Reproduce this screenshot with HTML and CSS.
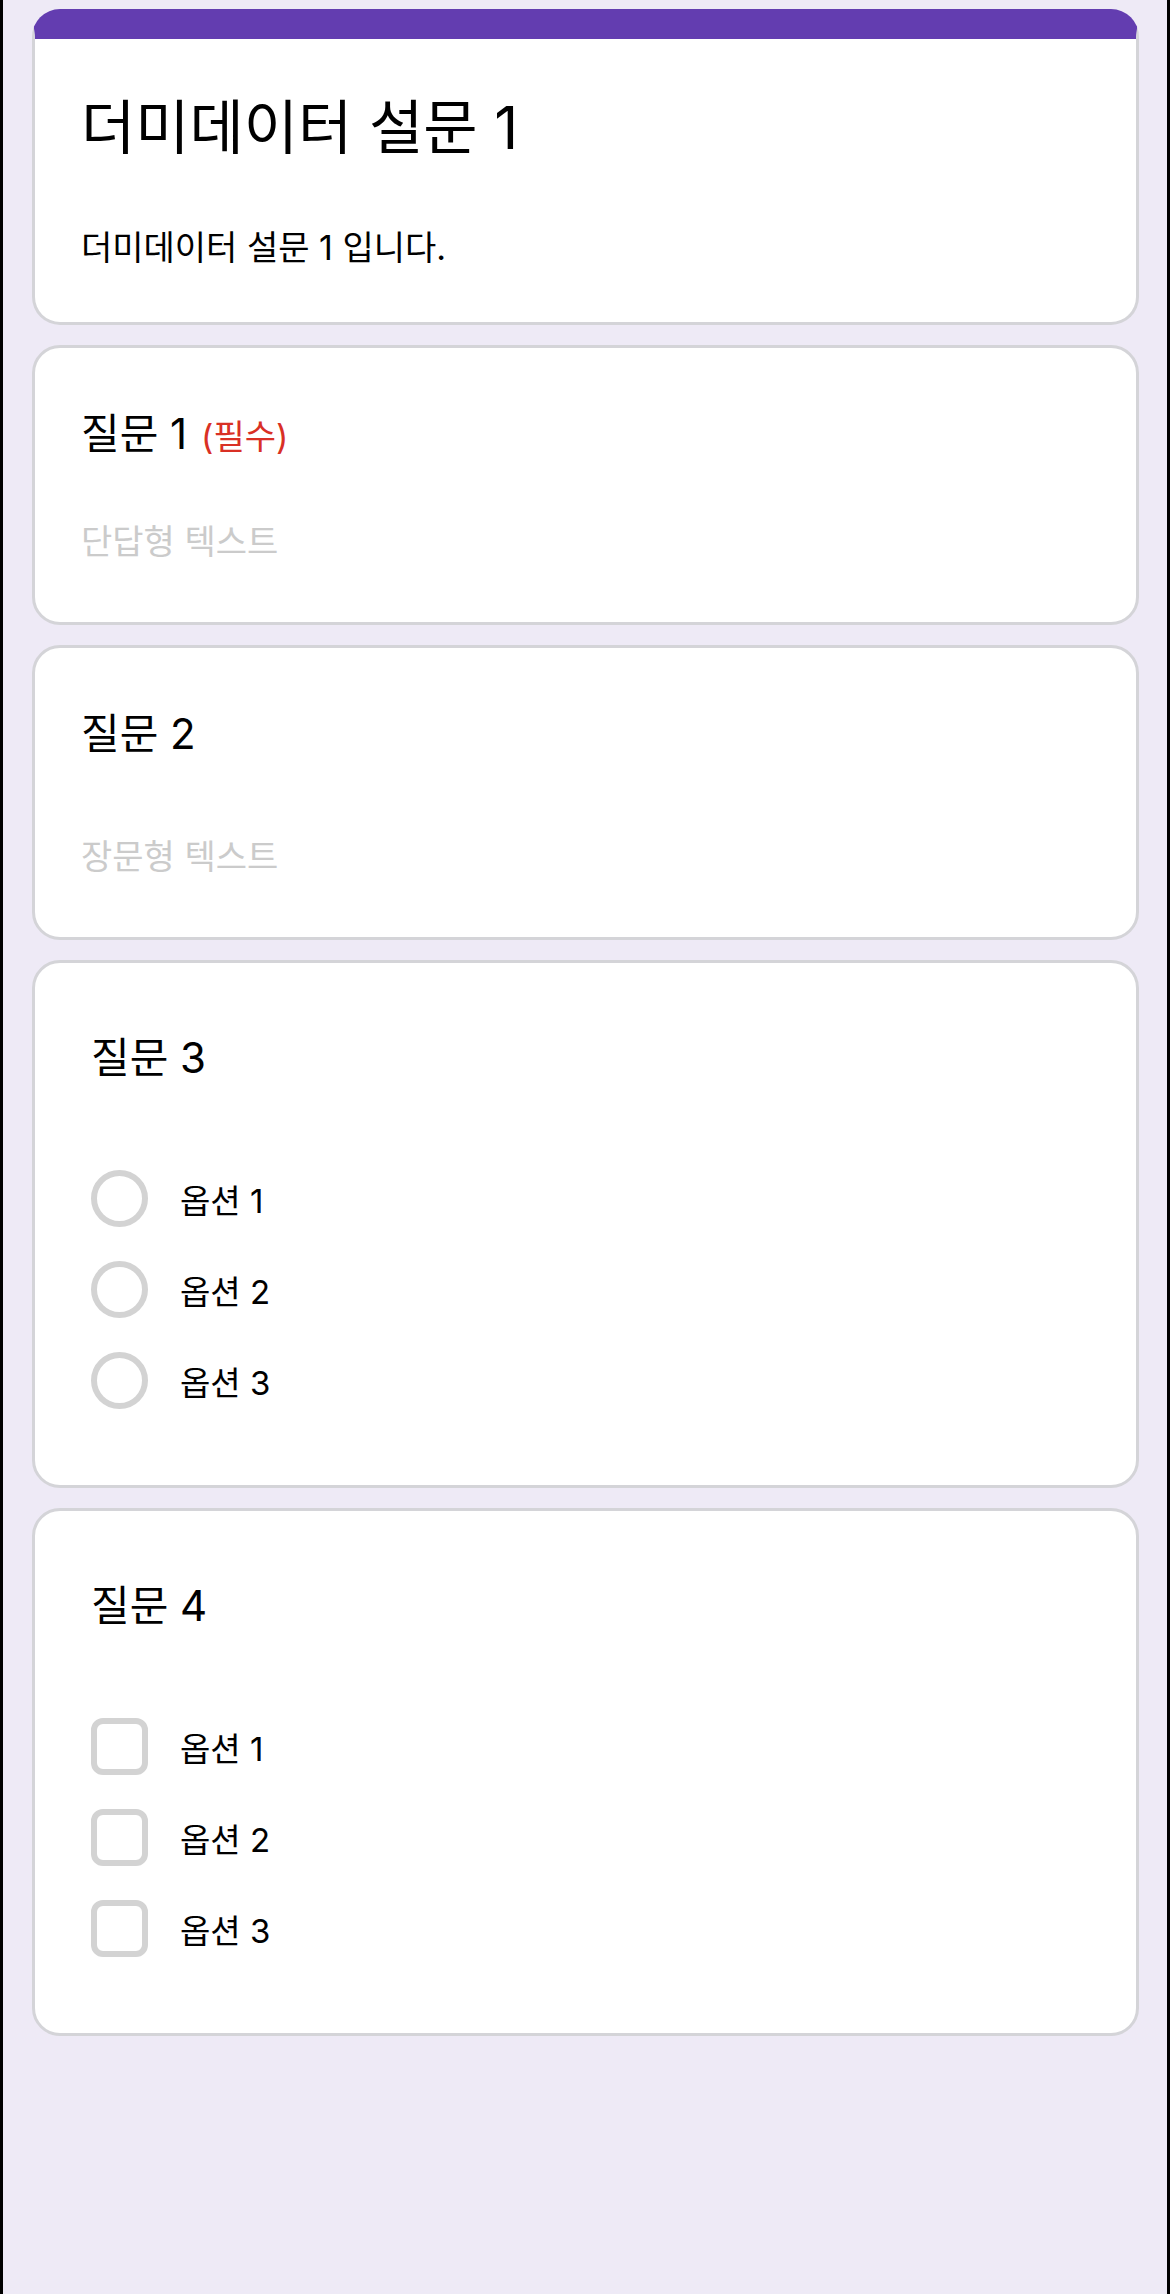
FILE: index.html
```html
<!DOCTYPE html>
<html lang="ko">
<head>
<meta charset="utf-8">
<title>더미데이터 설문 1</title>
<link rel="stylesheet" href="styles.css">
</head>
<body>
<main class="page">
  <header class="card card-head">
    <h1 class="form-title">더미데이터 설문 1</h1>
    <p class="form-desc">더미데이터 설문 1 입니다.</p>
  </header>

  <section class="card">
    <h2 class="q-title">질문 1 <span class="required">(필수)</span></h2>
    <div class="answer">단답형 텍스트</div>
  </section>

  <section class="card">
    <h2 class="q-title">질문 2</h2>
    <div class="answer long">장문형 텍스트</div>
  </section>

  <section class="card card-choice">
    <h2 class="q-title">질문 3</h2>
    <ul class="options">
      <li class="option"><span class="radio"></span><span class="opt-label">옵션 1</span></li>
      <li class="option"><span class="radio"></span><span class="opt-label">옵션 2</span></li>
      <li class="option"><span class="radio"></span><span class="opt-label">옵션 3</span></li>
    </ul>
  </section>

  <section class="card card-choice">
    <h2 class="q-title">질문 4</h2>
    <ul class="options">
      <li class="option"><span class="check"></span><span class="opt-label">옵션 1</span></li>
      <li class="option"><span class="check"></span><span class="opt-label">옵션 2</span></li>
      <li class="option"><span class="check"></span><span class="opt-label">옵션 3</span></li>
    </ul>
  </section>
</main>
</body>
</html>
```

FILE: styles.css
```css
* {
  box-sizing: border-box;
}

html,
body {
  margin: 0;
  padding: 0;
}

body {
  font-family: Inter, "Noto Sans CJK KR", sans-serif;
  color: #000;
  background: #eeeaf6;
}

.page {
  min-height: 2294px;
  border-left: 3px solid #000;
  border-right: 3px solid #000;
  padding: 9px 28px 40px 29px;
  display: flex;
  flex-direction: column;
  gap: 20px;
}

.card {
  background: #fff;
  border: 3px solid #d4d4d8;
  border-radius: 28px;
  padding: 61px 46px 60px;
}

.card-head {
  border-top: 30px solid #633db0;
  padding: 57px 46px 54px;
}

.form-title {
  margin: 0;
  font-size: 59px;
  line-height: 64px;
  letter-spacing: 0;
  font-weight: 400;
}

.form-desc {
  margin: 68px 0 0;
  font-size: 34px;
  line-height: 40px;
  letter-spacing: 0;
}

.q-title {
  margin: 0;
  font-size: 42px;
  line-height: 50px;
  letter-spacing: 0;
  font-weight: 400;
}

.required {
  color: #d93025;
  font-size: 34px;
  line-height: 1;
  margin-left: 2px;
}

.answer {
  margin-top: 63px;
  color: #cbcbcb;
  font-size: 34px;
  line-height: 40px;
}

.answer.long {
  margin-top: 78px;
}

.card-choice {
  padding: 70px 56px 76px;
}

.options {
  list-style: none;
  margin: 87px 0 0;
  padding: 0;
  display: flex;
  flex-direction: column;
  gap: 34px;
}

.option {
  display: flex;
  align-items: center;
  gap: 32px;
  height: 57px;
  font-size: 33px;
}

.radio,
.check {
  flex: none;
  width: 57px;
  height: 57px;
  border: 6px solid #d3d3d3;
  background: #fff;
}

.radio {
  border-radius: 50%;
}

.check {
  border-radius: 12px;
}
```
